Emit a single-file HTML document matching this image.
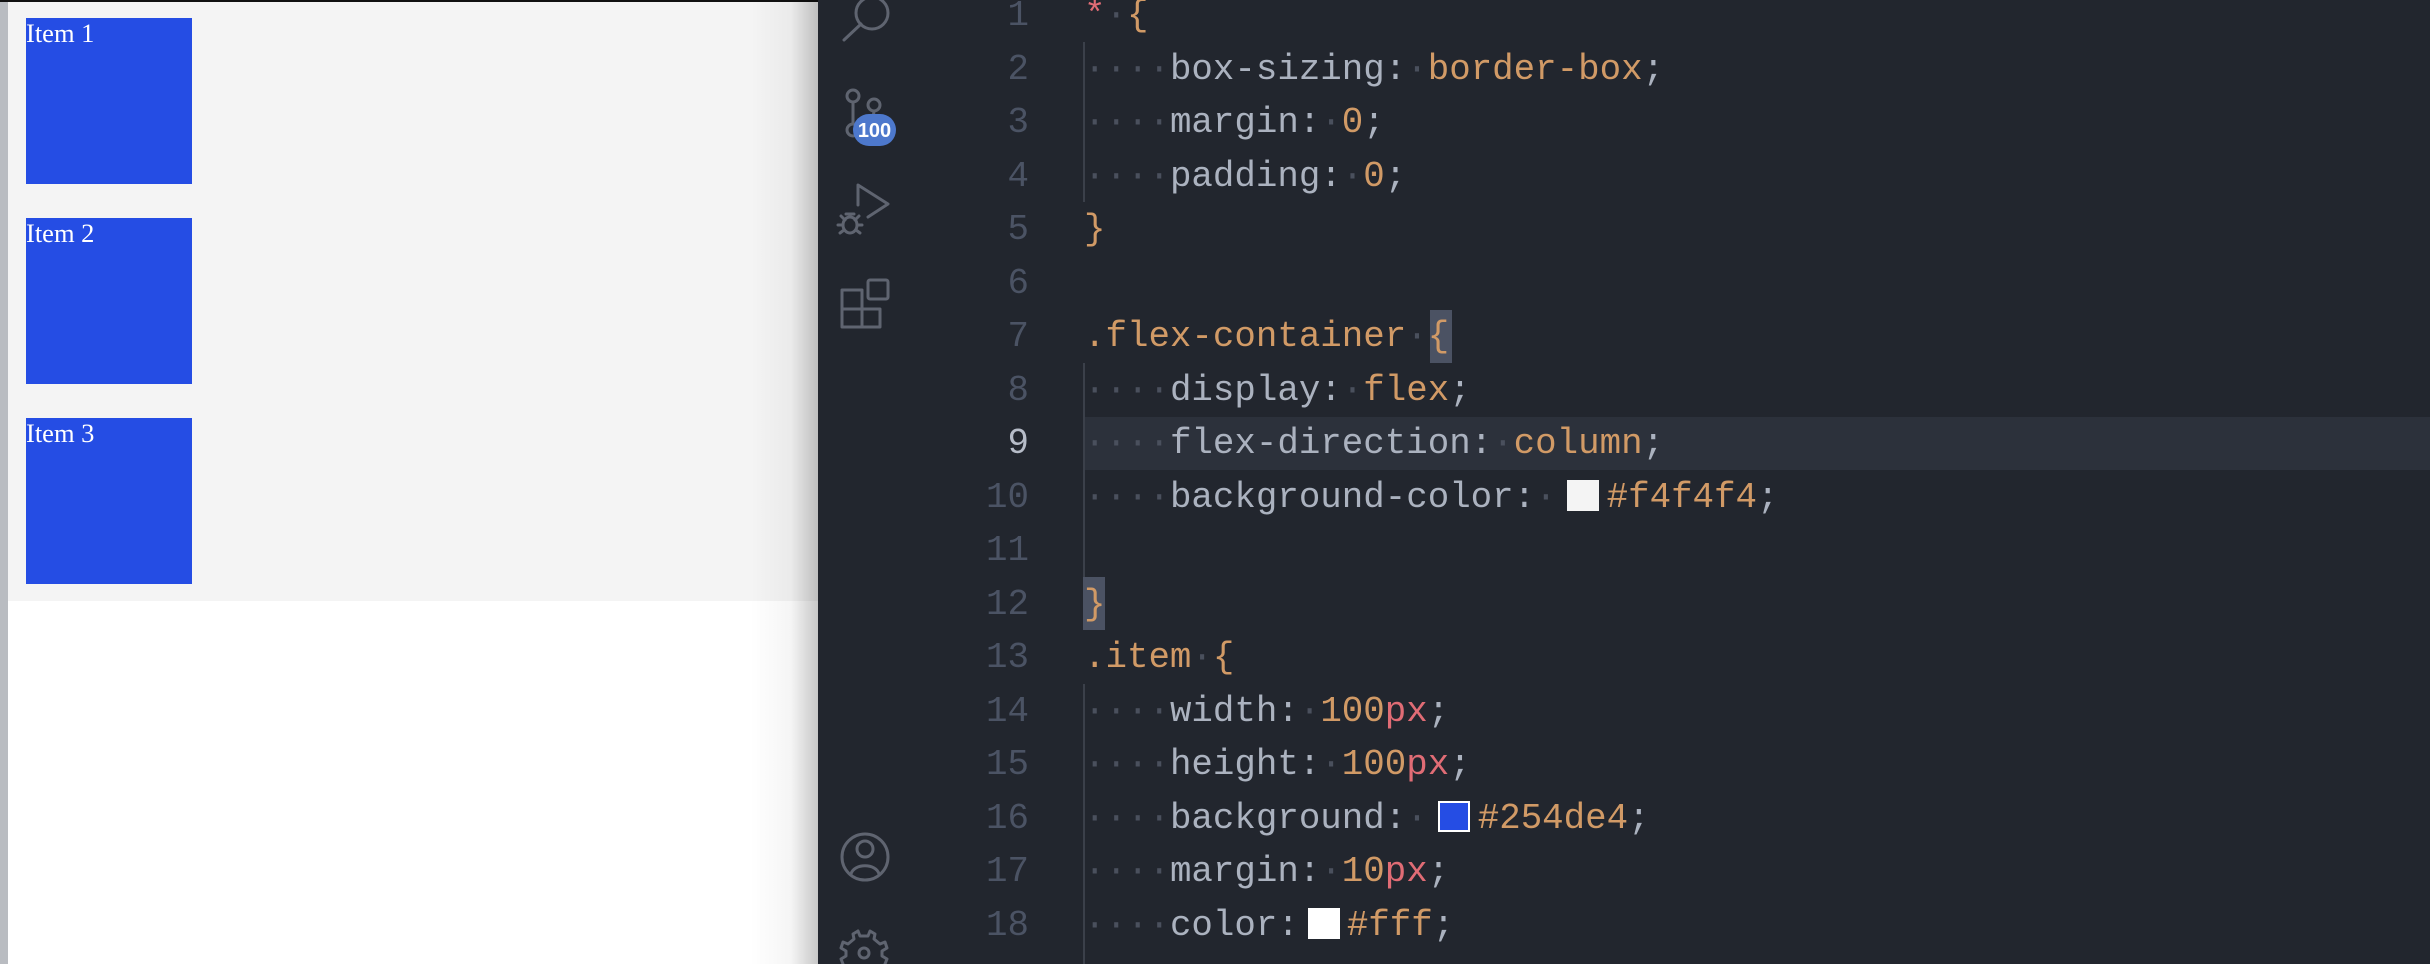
<!DOCTYPE html>
<html><head><meta charset="utf-8"><style>
*{box-sizing:border-box;margin:0;padding:0}
html,body{width:2430px;height:964px;overflow:hidden;background:#fff;position:relative}
#left{position:absolute;left:0;top:0;width:818px;height:964px;background:#fff}
#lb{position:absolute;left:0;top:0;width:8px;height:964px;background:#b9bcc1}
#f4{position:absolute;left:8px;top:2px;width:810px;height:599px;background:#f4f4f4}
#topline{position:absolute;left:0;top:0;width:818px;height:2px;background:#111}
.item{position:absolute;left:26px;width:166px;height:166px;background:#254de4;color:#fff;font-family:"Liberation Serif",serif;font-size:26.5px;line-height:30px}
#shadow{position:absolute;left:750px;top:0;width:68px;height:964px;background:linear-gradient(to right,rgba(0,0,0,0),rgba(0,0,0,0.04) 60%,rgba(0,0,0,0.22))}
#ed{position:absolute;left:818px;top:0;width:1612px;height:964px;background:#22262e}
#act{position:absolute;left:818px;top:0;width:92px;height:964px}
.ln{position:absolute;left:0;width:1029px;text-align:right;font-family:"Liberation Mono",monospace;font-size:35.8px;color:#4b5364;height:53.5px;line-height:53.5px}
.cl{position:absolute;left:1084px;font-family:"Liberation Mono",monospace;font-size:35.8px;color:#abb2bf;height:53.5px;line-height:53.5px;white-space:pre}
.d{color:#4a505d}.o{color:#d19a66}.r{color:#e06c75}
.sw{display:inline-block;width:32px;height:31px;vertical-align:-4px;border:2px solid #fff;margin:0 8px 0 10px}
.guide{position:absolute;left:1083px;width:2px;background:#3b404a}
</style></head><body>
<div id="left">
<div id="lb"></div>
<div id="f4"></div>
<div id="topline"></div>
<div class="item" style="top:18px">Item 1</div>
<div class="item" style="top:218px">Item 2</div>
<div class="item" style="top:418px">Item 3</div>
<div id="shadow"></div>
</div>
<div id="ed"></div>
<div style="position:absolute;left:1084px;top:417px;width:1346px;height:53px;background:#2c313b"></div>
<div style="position:absolute;left:1430px;top:310px;width:22px;height:53px;background:#4b5263"></div>
<div style="position:absolute;left:1083px;top:577px;width:22px;height:53px;background:#4b5263"></div>
<div class="guide" style="top:42px;height:160px"></div>
<div class="guide" style="top:363px;height:214px"></div>
<div class="guide" style="top:684px;height:280px"></div>

<svg id="act" width="92" height="964" viewBox="818 0 92 964" fill="none" stroke="#5f6470" stroke-width="3" stroke-linecap="round" stroke-linejoin="round">
<circle cx="872" cy="13" r="16"/><path d="M844 40 L861 24"/>
<circle cx="853" cy="96" r="6"/><circle cx="874" cy="105" r="6"/><circle cx="853" cy="130" r="6"/><path d="M853 102 V124 M874 111 C874 122 860 124 856 126"/>
<path d="M858 205 V185 L888 204 L868 217"/>
<ellipse cx="850" cy="225" rx="7" ry="8"/><path d="M841 216 L845 220 M859 216 L855 220 M838 225 H843 M857 225 H862 M840 233 L844 230 M860 233 L856 230 M846 214 H854"/>
<path d="M842 290 H862 V327 H842 Z M842 309 H880 V327 H862 M862 290 V309"/><rect x="868" y="280" width="20" height="19" rx="2"/>
<circle cx="865" cy="857" r="23"/><circle cx="865" cy="849" r="8"/><path d="M851 874 C854 863 876 863 879 874"/>
<circle cx="864" cy="953" r="5"/><path d="M858 931 L860 936 L868 936 L870 931 L875 934 L874 939 L880 944 L885 942 L887 948 L882 951 L882 956 L887 959 L885 964"/><path d="M858 931 L853 934 L854 939 L848 944 L843 942 L841 948 L846 951 L846 956 L841 959 L843 964"/>
<rect x="853" y="114" width="43" height="32" rx="16" fill="#4d78cc" stroke="none"/>
<text x="874.5" y="137" text-anchor="middle" fill="#fff" stroke="none" font-family="Liberation Sans,sans-serif" font-weight="bold" font-size="20">100</text>
</svg>

<div class="ln" style="top:-11px">1</div><div class="cl" style="top:-11px"><span class="r">*</span><span class="d">·</span><span class="o">{</span></div>
<div class="ln" style="top:42.5px">2</div><div class="cl" style="top:42.5px"><span class="d">····</span>box-sizing:<span class="d">·</span><span class="o">border-box</span>;</div>
<div class="ln" style="top:96px">3</div><div class="cl" style="top:96px"><span class="d">····</span>margin:<span class="d">·</span><span class="o">0</span>;</div>
<div class="ln" style="top:149.5px">4</div><div class="cl" style="top:149.5px"><span class="d">····</span>padding:<span class="d">·</span><span class="o">0</span>;</div>
<div class="ln" style="top:203px">5</div><div class="cl" style="top:203px"><span class="o">}</span></div>
<div class="ln" style="top:256.5px">6</div>
<div class="ln" style="top:310px">7</div><div class="cl" style="top:310px"><span class="o">.flex-container</span><span class="d">·</span><span class="o">{</span></div>
<div class="ln" style="top:363.5px">8</div><div class="cl" style="top:363.5px"><span class="d">····</span>display:<span class="d">·</span><span class="o">flex</span>;</div>
<div class="ln" style="top:417px;color:#b6bcc8">9</div><div class="cl" style="top:417px"><span class="d">····</span>flex-direction:<span class="d">·</span><span class="o">column</span>;</div>
<div class="ln" style="top:470.5px">10</div><div class="cl" style="top:470.5px"><span class="d">····</span>background-color:<span class="d">·</span><span class="sw" style="background:#f4f4f4;border-color:#f4f4f4"></span><span class="o">#f4f4f4</span>;</div>
<div class="ln" style="top:524px">11</div>
<div class="ln" style="top:577.5px">12</div><div class="cl" style="top:577.5px"><span class="o">}</span></div>
<div class="ln" style="top:631px">13</div><div class="cl" style="top:631px"><span class="o">.item</span><span class="d">·</span><span class="o">{</span></div>
<div class="ln" style="top:684.5px">14</div><div class="cl" style="top:684.5px"><span class="d">····</span>width:<span class="d">·</span><span class="o">100</span><span class="r">px</span>;</div>
<div class="ln" style="top:738px">15</div><div class="cl" style="top:738px"><span class="d">····</span>height:<span class="d">·</span><span class="o">100</span><span class="r">px</span>;</div>
<div class="ln" style="top:791.5px">16</div><div class="cl" style="top:791.5px"><span class="d">····</span>background:<span class="d">·</span><span class="sw" style="background:#254de4"></span><span class="o">#254de4</span>;</div>
<div class="ln" style="top:845px">17</div><div class="cl" style="top:845px"><span class="d">····</span>margin:<span class="d">·</span><span class="o">10</span><span class="r">px</span>;</div>
<div class="ln" style="top:898.5px">18</div><div class="cl" style="top:898.5px"><span class="d">····</span>color:<span class="sw" style="background:#fff;margin-left:9px;margin-right:7px"></span><span class="o">#fff</span>;</div>
</body></html>
